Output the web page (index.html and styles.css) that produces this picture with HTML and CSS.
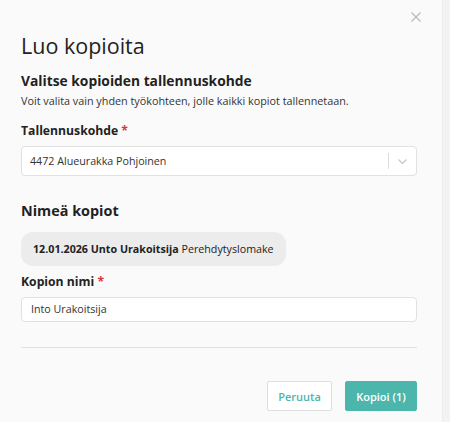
FILE: index.html
```html
<!DOCTYPE html>
<html lang="fi">
<head>
<meta charset="utf-8">
<link rel="stylesheet" href="styles.css">
</head>
<body>
<div class="page">
  <div class="modal">
    <button class="close" aria-label="Sulje">
      <svg width="10" height="10" viewBox="0 0 10 10"><path d="M0.5 0.5L9.5 9.5M9.5 0.5L0.5 9.5" stroke="#b8b8b8" stroke-width="1.2" fill="none"/></svg>
    </button>
    <h1 class="title">Luo kopioita</h1>
    <h2 class="section section-1">Valitse kopioiden tallennuskohde</h2>
    <p class="desc">Voit valita vain yhden työkohteen, jolle kaikki kopiot tallennetaan.</p>
    <label class="label">Tallennuskohde <span class="req">*</span></label>
    <div class="select">
      <span class="select-value">4472 Alueurakka Pohjoinen</span>
      <span class="select-sep"></span>
      <span class="select-arrow">
        <svg width="9" height="5" viewBox="0 0 9 5"><path d="M0.5 0.5L4.5 4.5L8.5 0.5" stroke="#c4c4c4" stroke-width="1.1" fill="none"/></svg>
      </span>
    </div>
    <h2 class="section section-2">Nimeä kopiot</h2>
    <div class="chip"><strong>12.01.2026 Unto Urakoitsija</strong> Perehdytyslomake</div>
    <label class="label label-2">Kopion nimi <span class="req">*</span></label>
    <div class="input">Into Urakoitsija</div>
    <hr class="divider">
    <div class="actions">
      <button class="btn btn-secondary">Peruuta</button>
      <button class="btn btn-primary">Kopioi (1)</button>
    </div>
  </div>
  <div class="scroll"></div>
</div>
</body>
</html>
```
FILE: styles.css
```css
* { box-sizing: border-box; }
html, body { margin: 0; padding: 0; }
body {
  font-family: "Open Sans", "Noto Sans", sans-serif;
  color: #222;
  background: #fafafa;
}
.page {
  display: flex;
  width: 450px;
  height: 422px;
  overflow: hidden;
}
.modal {
  position: relative;
  width: 442px;
  flex: none;
  padding: 30px 25px 0 21px;
  background: #fafafa;
}
.scroll {
  flex: 1;
  background: #f3f3f3;
  border-left: 1px solid #ececec;
}
.close {
  position: absolute;
  top: 12px;
  right: 21px;
  width: 10px;
  height: 10px;
  padding: 0;
  border: 0;
  background: none;
  display: flex;
}
.title {
  margin: 0;
  font-size: 21.5px;
  font-weight: 400;
  line-height: 32px;
  color: #222;
}
.section {
  margin: 9px 0 0;
  font-size: 14.4px;
  font-weight: 700;
  line-height: 20px;
  color: #222;
}
.section-1 { font-size: 13.8px; }
.desc {
  margin: 2px 0 0;
  font-size: 10.8px;
  line-height: 16px;
  color: #333;
}
.label {
  display: block;
  margin-top: 13px;
  font-size: 12.2px;
  font-weight: 700;
  line-height: 18px;
  color: #222;
}
.req { color: #e0343a; }
.select {
  margin-top: 6px;
  height: 30px;
  display: flex;
  align-items: center;
  background: #fff;
  border: 1px solid #e1e1e1;
  border-radius: 4px;
  padding-left: 8px;
}
.select-value {
  flex: 1;
  font-size: 10.7px;
  color: #333;
}
.select-sep {
  width: 1px;
  height: 16px;
  background: #dcdcdc;
}
.select-arrow {
  width: 27px;
  display: flex;
  justify-content: center;
}
.section-2 { margin-top: 25px; }
.chip {
  display: inline-block;
  margin-top: 11px;
  height: 34px;
  line-height: 34px;
  padding: 0 12px;
  background: #ececed;
  border-radius: 12px;
  font-size: 10.7px;
  color: #222;
}
.chip strong { font-weight: 700; }
.label-2 { margin-top: 7px; }
.input {
  margin-top: 6px;
  height: 25px;
  line-height: 23px;
  background: #fff;
  border: 1px solid #e1e1e1;
  border-radius: 4px;
  padding-left: 9px;
  font-size: 10.7px;
  color: #333;
}
.divider {
  margin: 25px 0 0;
  border: 0;
  border-top: 1px solid #e0e0e0;
}
.actions {
  display: flex;
  justify-content: flex-end;
  gap: 13px;
  margin-top: 33px;
}
.btn {
  height: 30px;
  font-family: inherit;
  font-size: 11px;
  font-weight: 600;
  border-radius: 2px;
  cursor: pointer;
  padding: 0;
}
.btn-secondary {
  width: 65px;
  background: #fff;
  border: 1px solid #dedede;
  color: #4db6ac;
}
.btn-primary {
  width: 72px;
  background: #4db6ac;
  border: 1px solid #4db6ac;
  color: #fff;
}
```
